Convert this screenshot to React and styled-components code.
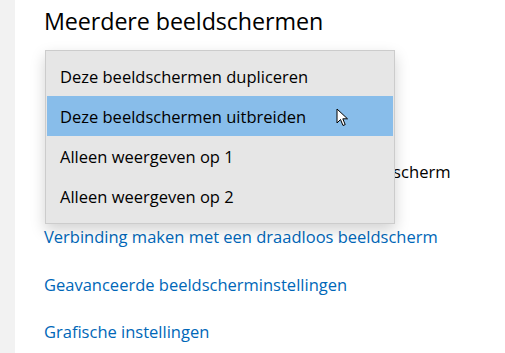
import React from "react";
import styled, { createGlobalStyle } from "styled-components";

const Global = createGlobalStyle`
  html, body { margin: 0; padding: 0; background: #ffffff; }
  body { font-family: "Open Sans", "Noto Sans", sans-serif; overflow: hidden; }
`;

const Shell = styled.div`
  display: flex;
  width: 505px;
  height: 353px;
`;

const SideStrip = styled.div`
  width: 15px;
  flex: none;
  background: #f2f2f2;
`;

const Main = styled.main`
  position: relative;
  flex: 1;
  padding: 4px 0 0 29px;
  background: #ffffff;
`;

const Heading = styled.h2`
  margin: 0;
  font-size: 23.3px;
  font-weight: 400;
  color: #000;
  line-height: 34px;
  letter-spacing: -0.1px;
`;

const Section = styled.div`
  display: flex;
  flex-direction: column;
  margin-top: 14px;
`;

const Spacer = styled.div`
  height: ${(p) => p.$h}px;
`;

const Label = styled.div`
  font-size: 16.6px;
  color: #000;
  line-height: 22px;
  padding-left: ${(p) => p.$indent || 0}px;
`;

const LinkText = styled.a`
  font-size: 16.5px;
  color: #0067b8;
  text-decoration: none;
  line-height: 22px;
  margin-top: ${(p) => p.$mt}px;
`;

const Menu = styled.ul`
  position: absolute;
  left: 30px;
  top: 50px;
  width: 346px;
  margin: 0;
  padding: 5px 1px 7px;
  list-style: none;
  background: #e6e6e6;
  border: 1px solid #cccccc;
  box-shadow: 0 6px 14px rgba(0, 0, 0, 0.18);
`;

const Item = styled.li`
  height: 40px;
  display: flex;
  align-items: center;
  padding-left: 13px;
  font-size: 16.5px;
  color: #000;
  background: ${(p) => (p.$active ? "#88bdea" : "transparent")};
  position: relative;
`;

const Cursor = styled.svg`
  position: absolute;
  left: 289px;
  top: 12px;
`;

export default function App() {
  return (
    <Shell>
      <Global />
      <SideStrip />
      <Main>
        <Heading>Meerdere beeldschermen</Heading>
        <Section>
          <Spacer $h={109} />
          <Label $indent={179}>Dit is mijn hoofdbeeldscherm</Label>
          <LinkText $mt={43}>Verbinding maken met een draadloos beeldscherm</LinkText>
          <LinkText $mt={26}>Geavanceerde beeldscherminstellingen</LinkText>
          <LinkText $mt={25}>Grafische instellingen</LinkText>
        </Section>
        <Menu>
          <Item>Deze beeldschermen dupliceren</Item>
          <Item $active>
            Deze beeldschermen uitbreiden
            <Cursor width="14" height="20" viewBox="0 0 14 20">
              <path d="M1 1 L1 15 L4.5 11.5 L7 17.5 L9.2 16.6 L6.8 10.8 L11.5 10.8 Z" fill="#fff" stroke="#000" strokeWidth="1" strokeLinejoin="round" />
            </Cursor>
          </Item>
          <Item>Alleen weergeven op 1</Item>
          <Item>Alleen weergeven op 2</Item>
        </Menu>
      </Main>
    </Shell>
  );
}
